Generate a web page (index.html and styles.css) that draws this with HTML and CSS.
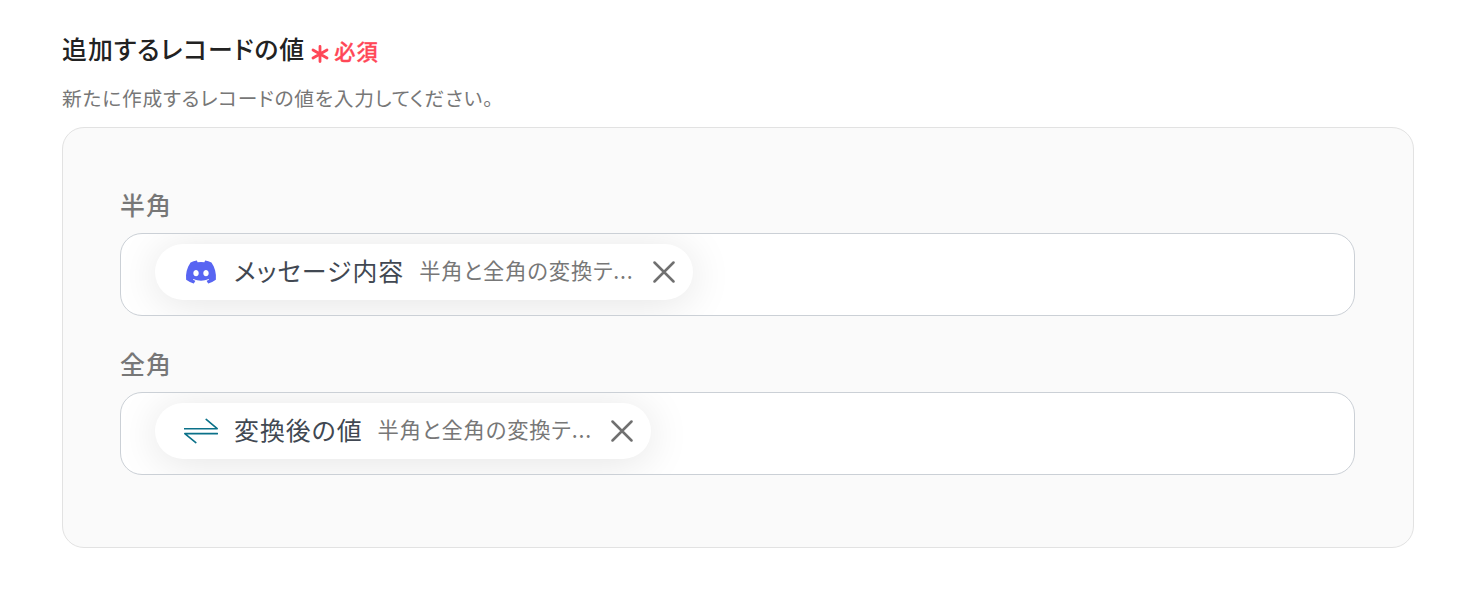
FILE: index.html
```html
<!DOCTYPE html>
<html lang="ja">
<head>
<meta charset="utf-8">
<title>追加するレコードの値</title>
<link rel="stylesheet" href="styles.css">
</head>
<body>
<main class="form">
  <header class="heading">
    <h1 class="title">追加するレコードの値</h1>
    <svg class="asterisk" viewBox="0 0 18 18"><path d="M9 1.5v15M2 5l14 8M16 5L2 13"/></svg>
    <span class="required">必須</span>
  </header>
  <p class="description">新たに作成するレコードの値を入力してください。</p>
  <section class="panel">
    <div class="field">
      <div class="label">半角</div>
      <div class="input">
        <div class="chip">
          <svg class="icon discord" viewBox="0 0 24 24"><path d="M20.317 4.37a19.791 19.791 0 0 0-4.885-1.515.074.074 0 0 0-.079.037c-.21.375-.444.864-.608 1.25a18.27 18.27 0 0 0-5.487 0 12.64 12.64 0 0 0-.617-1.25.077.077 0 0 0-.079-.037A19.736 19.736 0 0 0 3.677 4.37a.07.07 0 0 0-.032.027C.533 9.046-.32 13.58.099 18.057a.082.082 0 0 0 .031.057 19.9 19.9 0 0 0 5.993 3.03.078.078 0 0 0 .084-.028 14.09 14.09 0 0 0 1.226-1.994.076.076 0 0 0-.041-.106 13.107 13.107 0 0 1-1.872-.892.077.077 0 0 1-.008-.128 10.2 10.2 0 0 0 .372-.292.074.074 0 0 1 .077-.01c3.928 1.793 8.18 1.793 12.062 0a.074.074 0 0 1 .078.01c.12.098.246.198.373.292a.077.077 0 0 1-.006.127 12.299 12.299 0 0 1-1.873.892.077.077 0 0 0-.041.107c.36.698.772 1.362 1.225 1.993a.076.076 0 0 0 .084.028 19.839 19.839 0 0 0 6.002-3.03.077.077 0 0 0 .032-.054c.5-5.177-.838-9.674-3.549-13.66a.061.061 0 0 0-.031-.03zM8.02 15.33c-1.183 0-2.157-1.085-2.157-2.419 0-1.333.956-2.419 2.157-2.419 1.21 0 2.176 1.096 2.157 2.42 0 1.333-.956 2.418-2.157 2.418zm7.975 0c-1.183 0-2.157-1.085-2.157-2.419 0-1.333.955-2.419 2.157-2.419 1.21 0 2.176 1.096 2.157 2.42 0 1.333-.946 2.418-2.157 2.418z"/></svg>
          <span class="name">メッセージ内容</span>
          <span class="source">半角と全角の変換テ...</span>
          <svg class="close" viewBox="0 0 22 22"><path d="M1.5 1.5l19 19M20.5 1.5l-19 19"/></svg>
        </div>
      </div>
    </div>
    <div class="field">
      <div class="label">全角</div>
      <div class="input">
        <div class="chip">
          <svg class="icon arrows" viewBox="0 0 34 26"><path d="M.5 10.7h32.7L22.2 1.4M33.5 15.6H.8l11 9"/></svg>
          <span class="name">変換後の値</span>
          <span class="source">半角と全角の変換テ...</span>
          <svg class="close" viewBox="0 0 22 22"><path d="M1.5 1.5l19 19M20.5 1.5l-19 19"/></svg>
        </div>
      </div>
    </div>
  </section>
</main>
</body>
</html>
```

FILE: styles.css
```css
* { box-sizing: border-box; letter-spacing: 0.04em; }
body {
  margin: 0;
  background: #fff;
  font-family: "Noto Sans CJK JP", sans-serif;
  font-feature-settings: "palt";
  white-space: nowrap;
}
.form { padding: 29px 58px 0 62px; }
.heading { display: flex; align-items: center; height: 38px; }
.title { margin: 0; font-size: 24.9px; line-height: 38px; font-weight: 500; color: #222; }
.asterisk { width: 18px; height: 18px; margin: 12px 5.5px 0 5.5px; fill: none; stroke: #ff4757; stroke-width: 2.8; stroke-linecap: round; }
.required { margin-top: 5px; font-size: 21.3px; line-height: 32px; font-weight: 500; color: #ff4757; -webkit-text-stroke: 0.3px #ff4757; }
.description { margin: 16px 0 0; height: 44px; font-size: 19.74px; line-height: 30px; color: #777; }
.panel {
  display: flex;
  flex-direction: column;
  gap: 29px;
  width: 1352px;
  height: 421px;
  padding: 58px 58px 0 57px;
  border: 1px solid #e2e2e2;
  border-radius: 22px;
  background: #fafafa;
}
.label { height: 47px; font-size: 24.9px; line-height: 36px; font-weight: 500; color: #777; }
.input {
  display: flex;
  align-items: flex-start;
  height: 83px;
  padding: 10px 34px;
  border: 1px solid #cbd0d6;
  border-radius: 22px;
  background: #fff;
  overflow: hidden;
}
.chip {
  display: flex;
  align-items: center;
  height: 56px;
  padding: 0 18px 0 29px;
  border-radius: 28px;
  background: #fff;
  box-shadow: 0 4px 44px rgba(0, 0, 0, 0.11);
}
.icon { width: 34px; flex: none; margin-right: 16px; }
.discord { height: 30px; fill: #5865f2; }
.arrows { height: 26px; fill: none; stroke: #0b7189; stroke-width: 1.6; stroke-linecap: round; stroke-linejoin: round; }
.name { margin: 0 15px 4px 0; font-size: 24.9px; line-height: 38px; color: #414852; }
.source { margin: 0 19px 4px 0; font-size: 21.3px; line-height: 32px; color: #777; }
.close { width: 22px; height: 22px; flex: none; fill: none; stroke: #707070; stroke-width: 2.5; stroke-linecap: round; }
```
